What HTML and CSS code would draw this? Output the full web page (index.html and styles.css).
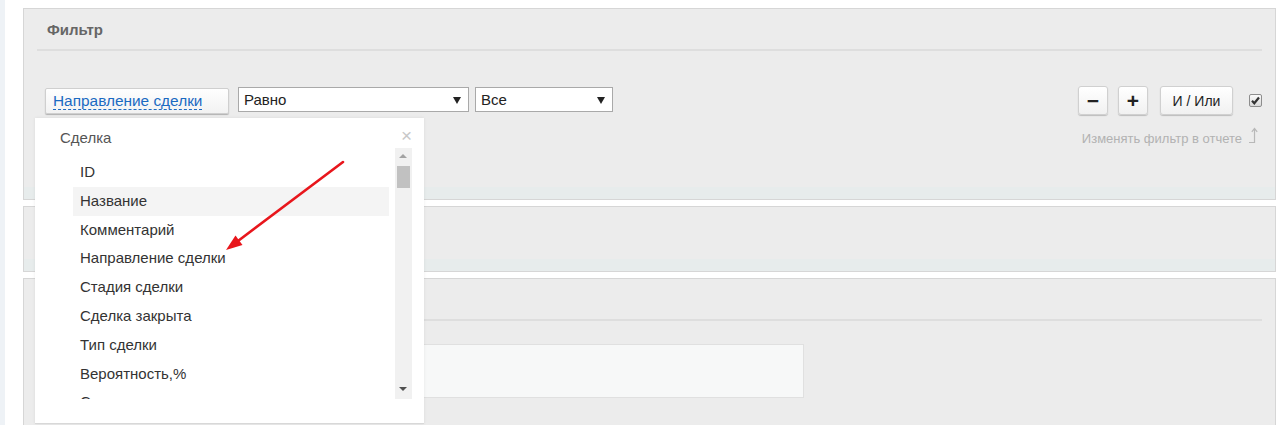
FILE: index.html
```html
<!DOCTYPE html>
<html lang="ru">
  <head>
    <meta charset="UTF-8" />
    <title>Фильтр отчета</title>
    <link rel="stylesheet" href="styles.css">
  </head>
  <body>
    <div class="page">
      <aside class="rail"></aside>

      <main class="content">
        <section class="panel panel-filter">
          <header class="panel-head"><h2>Фильтр</h2></header>

          <div class="filter-body">
            <div class="filter-left">
              <button class="field-btn"><span>Направление сделки</span></button>
              <div class="select select-wide">Равно<i class="caret"></i></div>
              <div class="select select-narrow">Все<i class="caret"></i></div>
            </div>

            <div class="filter-right">
              <div class="tools">
                <button class="tool-btn sign">&minus;</button>
                <button class="tool-btn sign">+</button>
                <button class="tool-btn logic">И / Или</button>
                <span class="check">
                  <svg width="11" height="11" viewBox="0 0 11 11">
                    <path d="M2 5.8 L4.3 8.3 L9 2.5" fill="none" stroke="#333" stroke-width="2.2" />
                  </svg>
                </span>
              </div>
              <div class="hint">
                Изменять фильтр в отчете
                <svg width="10" height="17" viewBox="0 0 10 17">
                  <path d="M1 15.5 H6.5 V2" fill="none" stroke="#b8b8b8" stroke-width="1.2" />
                  <path d="M3.8 4.8 L6.5 1.5 L9.2 4.8" fill="none" stroke="#b8b8b8" stroke-width="1.2" />
                </svg>
              </div>
            </div>
          </div>
        </section>

        <section class="panel panel-short"></section>

        <section class="panel panel-tall">
          <header class="panel-head"><h2></h2></header>
          <div class="panel-box"></div>
        </section>
      </main>
    </div>

    <div class="picker">
      <div class="picker-head">
        <span>Сделка</span>
        <span class="picker-close">&times;</span>
      </div>
      <div class="picker-body">
        <ul class="picker-list">
          <li>ID</li>
          <li class="hover">Название</li>
          <li>Комментарий</li>
          <li>Направление сделки</li>
          <li>Стадия сделки</li>
          <li>Сделка закрыта</li>
          <li>Тип сделки</li>
          <li>Вероятность,%</li>
          <li>Сумма</li>
        </ul>
        <div class="scrollbar">
          <i class="arrow-up"></i>
          <div class="thumb"></div>
          <i class="arrow-down"></i>
        </div>
      </div>
    </div>

    <svg class="pointer" width="1280" height="425" viewBox="0 0 1280 425">
      <line x1="343" y1="162" x2="238" y2="241" stroke="#e8161c" stroke-width="2.6" stroke-linecap="round" />
      <polygon points="226,250 242.5,245 235.5,235.5" fill="#e8161c" />
    </svg>
  </body>
</html>
```

FILE: styles.css
```css
html,
body {
  margin: 0;
  padding: 0;
  height: 425px;
  overflow: hidden;
  background-color: #fff;
  font-family: "Liberation Sans", Arial, sans-serif;
}

.page {
  display: flex;
  height: 425px;
  overflow: hidden;
}

.rail {
  width: 5px;
  flex: none;
  background-color: #eef2f6;
}

.content {
  flex: 1;
  display: flex;
  flex-direction: column;
  gap: 6px;
  padding: 8px 4px 0 18px;
}

.panel {
  flex: none;
  border: 1px solid #d6d6d6;
  padding: 0 13px;
  background: linear-gradient(to bottom, #ececec calc(100% - 12px), #e7ecec calc(100% - 12px));
}

.panel-head {
  height: 40px;
  border-bottom: 2px solid #dedede;
}

.panel-head h2 {
  margin: 0;
  padding-left: 10px;
  line-height: 42px;
  font-size: 15px;
  font-weight: bold;
  color: #666;
}

.panel-filter {
  height: 190px;
}

.panel-short {
  height: 64px;
}

.panel-tall {
  height: 146px;
  border-bottom: none;
  background: #ececec;
}

/* filter row */

.filter-body {
  display: flex;
  justify-content: space-between;
  padding-top: 35px;
}

.filter-left {
  display: flex;
  align-items: flex-start;
  padding: 1px 0 0 8px;
}

.field-btn {
  width: 184px;
  height: 26px;
  margin-top: 1px;
  padding: 0 0 0 7px;
  text-align: left;
  border: 1px solid #cfcfcf;
  border-radius: 2px;
  background: linear-gradient(#fefefe, #f2f2f2);
  box-shadow: 0 1px 1px rgba(0, 0, 0, 0.25);
  font-family: inherit;
  font-size: 15.4px;
}

.field-btn span {
  color: #1b6ac2;
  border-bottom: 1px dashed #1b6ac2;
}

.select {
  position: relative;
  height: 25px;
  box-sizing: border-box;
  margin-left: 9px;
  padding-left: 5px;
  border: 1px solid #a9a9a9;
  background-color: #fff;
  font-size: 15px;
  line-height: 23px;
  color: #222;
}

.select-wide {
  width: 231px;
}

.select-narrow {
  width: 138px;
  margin-left: 6px;
}

.caret {
  position: absolute;
  right: 7px;
  top: 9px;
  border-left: 4px solid transparent;
  border-right: 4px solid transparent;
  border-top: 7px solid #222;
}

.filter-right {
  display: flex;
  flex-direction: column;
  align-items: flex-end;
}

.tools {
  display: flex;
  align-items: center;
}

.tool-btn {
  height: 29px;
  padding: 0;
  border: 1px solid #d0d0d0;
  border-radius: 3px;
  background: linear-gradient(#fff, #f1f1f1);
  box-shadow: 0 1px 1px rgba(0, 0, 0, 0.2);
  font-family: inherit;
  color: #222;
}

.sign {
  width: 30px;
  margin-right: 10px;
  font-size: 21px;
  font-weight: bold;
  line-height: 26px;
}

.sign + .sign {
  margin-right: 12px;
}

.logic {
  width: 73px;
  font-size: 14px;
}

.check {
  display: flex;
  align-items: center;
  justify-content: center;
  width: 11px;
  height: 11px;
  margin-left: 16px;
  border: 1px solid #8d8d8d;
  border-radius: 2px;
  background: linear-gradient(#fafafa, #d9d9d9);
}

.hint {
  display: flex;
  align-items: flex-end;
  gap: 6px;
  margin: 12px 4px 0 0;
  font-size: 13px;
  color: #b2b2b2;
}

.hint svg {
  margin-bottom: 2px;
}

.panel-box {
  width: 757px;
  height: 52px;
  margin: 23px 0 0 8px;
  border: 1px solid #e0e0e0;
  background-color: #f7f8f8;
}

/* field picker popup */

.picker {
  position: absolute;
  left: 35px;
  top: 118px;
  width: 389px;
  height: 305px;
  background-color: #fff;
  border-bottom: 1px solid #d8d8d8;
  box-shadow: 0 0 3px rgba(0, 0, 0, 0.08);
}

.picker-head {
  display: flex;
  justify-content: space-between;
  box-sizing: border-box;
  height: 30px;
  padding: 11px 12px 0 25px;
  font-size: 15px;
  color: #555;
}

.picker-close {
  font-size: 19px;
  line-height: 14px;
  color: #c8c8c8;
}

.picker-body {
  display: flex;
  height: 251px;
  margin-left: 38px;
}

.picker-list {
  width: 316px;
  height: 251px;
  margin: 0;
  padding: 10px 0 0;
  box-sizing: border-box;
  overflow: hidden;
  list-style: none;
}

.picker-list li {
  height: 28.8px;
  padding-left: 7px;
  font-size: 15px;
  line-height: 28.8px;
  color: #333;
}

.picker-list li.hover {
  background-color: #f4f4f4;
}

.scrollbar {
  position: relative;
  width: 17px;
  margin-left: 6px;
  background-color: #f1f1f1;
}

.arrow-up,
.arrow-down {
  position: absolute;
  left: 4px;
  border-left: 4px solid transparent;
  border-right: 4px solid transparent;
}

.arrow-up {
  top: 6px;
  border-bottom: 4px solid #a3a3a3;
}

.arrow-down {
  bottom: 8px;
  border-top: 4px solid #505050;
}

.thumb {
  position: absolute;
  left: 2px;
  top: 18px;
  width: 13px;
  height: 22px;
  background-color: #c1c1c1;
}

.pointer {
  position: absolute;
  left: 0;
  top: 0;
  pointer-events: none;
}
```
